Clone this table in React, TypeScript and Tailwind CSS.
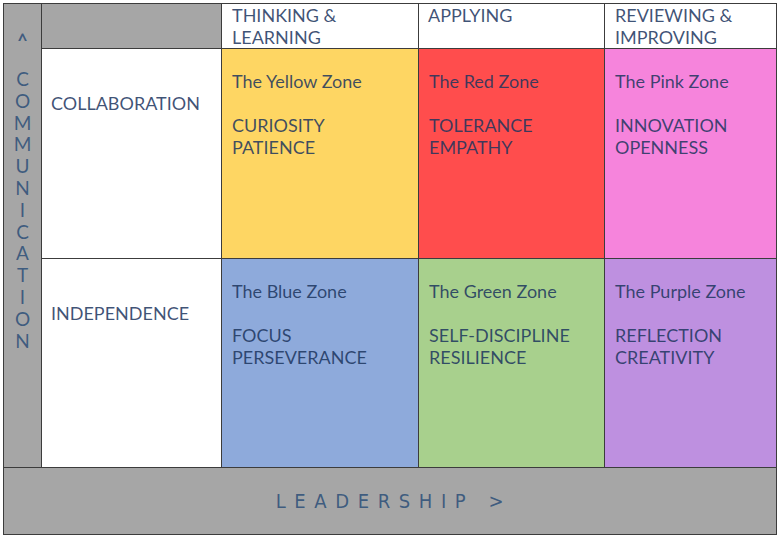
import React from "react";

const txt = "text-[#1c355e]/85";

function Zone({ bg, title, a, b }: { bg: string; title: string; a: string; b: string }) {
  return (
    <div className={`${bg} pl-[10px] pt-[21px] text-[18px] leading-[22px] ${txt}`}>
      <div>{title}</div>
      <div className="h-[22px]" />
      <div>{a}</div>
      <div>{b}</div>
    </div>
  );
}

export default function App() {
  const letters = "COMMUNICATION".split("");
  return (
    <div className="w-[780px] h-[540px] bg-white pl-[3px] pt-[3px]" style={{ fontFamily: "Lato, 'Open Sans', sans-serif" }}>
      <div className="grid w-[774px] grid-cols-[37px_179px_196px_185px_171px] grid-rows-[44px_209px_208px_66px] gap-px bg-[#3c3c3c] p-px">
        <div className="row-span-3 col-start-1 row-start-1 bg-[#a6a6a6] flex flex-col items-center text-[#2d4f78]/85 text-[19px]">
          <div className="mt-[27px] leading-[20px] text-[18px] font-bold">^</div>
          <div className="mt-[17px] flex flex-col items-center leading-[21.8px]">
            {letters.map((l, i) => (
              <span key={i}>{l}</span>
            ))}
          </div>
        </div>
        <div className="bg-[#a6a6a6]" />
        <div className={`bg-white pl-[10px] text-[18px] leading-[22px] ${txt}`}>THINKING &amp;<br />LEARNING</div>
        <div className={`bg-white pl-[9px] text-[18px] leading-[22px] ${txt}`}>APPLYING</div>
        <div className={`bg-white pl-[10px] text-[18px] leading-[22px] ${txt}`}>REVIEWING &amp;<br />IMPROVING</div>

        <div className={`bg-white pl-[9px] pt-[43px] text-[18px] leading-[22px] ${txt}`}>COLLABORATION</div>
        <Zone bg="bg-[#fed663]" title="The Yellow Zone" a="CURIOSITY" b="PATIENCE" />
        <Zone bg="bg-[#ff4d4d]" title="The Red Zone" a="TOLERANCE" b="EMPATHY" />
        <Zone bg="bg-[#f684dc]" title="The Pink Zone" a="INNOVATION" b="OPENNESS" />

        <div className={`bg-white pl-[9px] pt-[43px] text-[18px] leading-[22px] ${txt}`}>INDEPENDENCE</div>
        <Zone bg="bg-[#8eaadb]" title="The Blue Zone" a="FOCUS" b="PERSEVERANCE" />
        <Zone bg="bg-[#a8d08d]" title="The Green Zone" a="SELF-DISCIPLINE" b="RESILIENCE" />
        <Zone bg="bg-[#be90e0]" title="The Purple Zone" a="REFLECTION" b="CREATIVITY" />

        <div className="col-span-5 bg-[#a6a6a6] flex items-center justify-center">
          <span className="text-[20px] tracking-[0.43em] text-[#2d4f78]/85 pl-[8px]" style={{ fontFamily: "'DejaVu Sans Condensed', 'Liberation Sans Narrow', sans-serif", fontStretch: "condensed" }}>
            LEADERSHIP &gt;
          </span>
        </div>
      </div>
    </div>
  );
}
